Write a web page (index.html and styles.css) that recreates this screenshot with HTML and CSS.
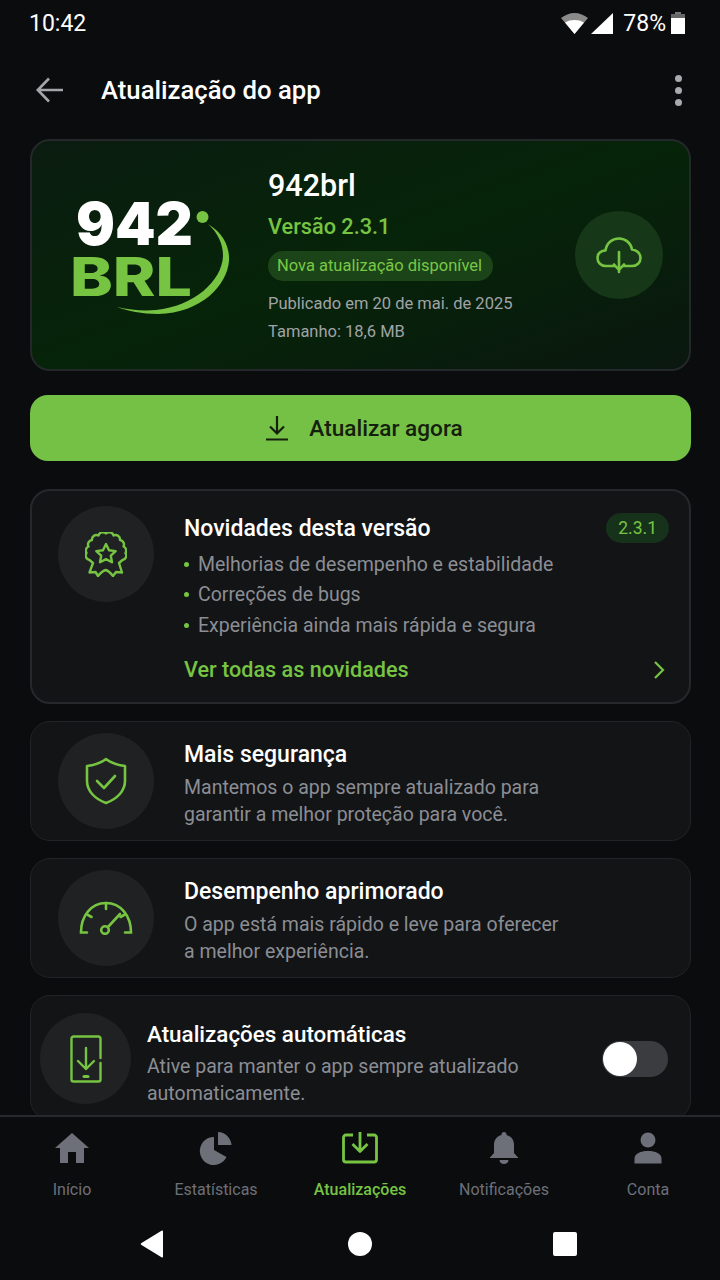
FILE: index.html
```html
<!DOCTYPE html>
<html lang="pt-BR">
<head>
  <meta charset="UTF-8">
  <meta name="viewport" content="width=device-width, initial-scale=1.0">
  <title>Atualização do app</title>
  <link rel="stylesheet" href="styles.css">
</head>
<body>
  <div class="status-bar">
    <span class="clock">10:42</span>
    <div class="status-right">
      <svg class="wifi" width="27" height="21" viewBox="0 0 27 21"><path d="M0 5C4 2 8.500 0 13.500 0S23 2 27 5L13.500 21z" fill="#8a8a8a"/><path d="M4 9.500C6.800 7.800 10 7 13.500 7s6.700.8 9.500 2.500L13.500 21z" fill="#fff"/></svg>
      <svg class="signal" width="22" height="21" viewBox="0 0 22 21"><path d="M22 0v21H0z" fill="#fff"/></svg>
      <span class="battery-text">78%</span>
      <svg class="battery" width="14" height="22" viewBox="0 0 14 22"><path d="M4 0h6v2H4z" fill="#777"/><path d="M0 2h14v4H0z" fill="#666"/><path d="M0 6h14v16H0z" fill="#fff"/></svg>
    </div>
  </div>

  <header class="topbar">
    <svg class="back" width="30" height="30" viewBox="0 0 30 30" fill="none" stroke="#a3a5a8" stroke-width="2.600"><path d="M28 15H3M14 3.500 2.800 15 14 26.500"/></svg>
    <h1>Atualização do app</h1>
    <div class="more"><i></i><i></i><i></i></div>
  </header>

  <main class="content">
    <section class="hero">
      <svg class="logo" width="170" height="130" viewBox="0 0 170 130">
        <text class="logo-num" x="4" y="65" textLength="117" lengthAdjust="spacingAndGlyphs">942</text>
        <text class="logo-brl" x="-2" y="116" textLength="122" lengthAdjust="spacingAndGlyphs">BRL</text>
        <circle cx="130.500" cy="37" r="6" fill="#76c442"/>
        <path transform="translate(-2 1)" d="M138 43C153 52 160 66 159 80 157 104 132 132 88 133 72 133 58 130 47 126 60 129 73 130 86 129 124 125 152 100 153 75 153 63 148 52 138 43z" fill="#76c442"/>
      </svg>
      <div class="hero-info">
        <div class="app-name">942brl</div>
        <div class="app-version">Versão 2.3.1</div>
        <div class="badge-new">Nova atualização disponível</div>
        <div class="meta">Publicado em 20 de mai. de 2025</div>
        <div class="meta">Tamanho: 18,6 MB</div>
      </div>
      <div class="cloud-circle">
        <svg width="46" height="38" viewBox="0 0 46 38" fill="none" stroke="#76c442" stroke-width="2.600" stroke-linecap="round" stroke-linejoin="round"><path d="M19 30H10C5 30 1.500 26.500 1.500 22S5 14.500 9.500 14.500C10.500 7 16 2.500 23 2.500S35 7.500 36 13.500C41 14 44.500 17.500 44.500 22S41 30 36 30H27"/><path d="M23 16V36M18 28.500l5 5.500 5-5.500"/></svg>
      </div>
    </section>

    <button class="update-btn">
      <svg width="24" height="26" viewBox="0 0 24 26" fill="none" stroke="#14200c" stroke-width="2.200"><path d="M12 1v17M5 11.500l7 7 7-7M1 24.500h22"/></svg>
      Atualizar agora
    </button>

    <section class="card card-news">
      <div class="icon-circle">
        <svg width="42" height="45" viewBox="0 0 42 45" fill="none" stroke="#76c442" stroke-width="2.400" stroke-linejoin="round" stroke-linecap="round"><path d="M21 1.500A4.500 4.500 0 0 1 28.500 3.500 4.500 4.500 0 0 1 35 8 4.500 4.500 0 0 1 38.500 14.500 4.500 4.500 0 0 1 40.500 21 4.500 4.500 0 0 1 37.500 28L34 31 37 40.500 31 40 28 44Q24 39 20.800 38 17 39 13 44L10.500 40 4.500 40.500 8 31 4.500 28A4.500 4.500 0 0 1 1.500 21 4.500 4.500 0 0 1 3.500 14.500 4.500 4.500 0 0 1 7 8 4.500 4.500 0 0 1 13.500 3.500 4.500 4.500 0 0 1 21 1.500z"/><path d="M21 12l3 6.200 6.700.9-4.900 4.600 1.200 6.600-6-3.200-6 3.200 1.200-6.600-4.900-4.600 6.700-.9z"/></svg>
      </div>
      <div class="card-body">
        <h2>Novidades desta versão</h2>
        <ul class="news-list">
          <li>Melhorias de desempenho e estabilidade</li>
          <li>Correções de bugs</li>
          <li>Experiência ainda mais rápida e segura</li>
        </ul>
        <a class="see-all">
          <span>Ver todas as novidades</span>
          <svg width="12" height="20" viewBox="0 0 12 20" fill="none" stroke="#76c442" stroke-width="2.200"><path d="M2 2l8 8-8 8"/></svg>
        </a>
      </div>
      <span class="version-tag">2.3.1</span>
    </section>

    <section class="card card-row">
      <div class="icon-circle">
        <svg width="42" height="48" viewBox="0 0 42 48" fill="none" stroke="#76c442" stroke-width="2.600" stroke-linejoin="round" stroke-linecap="round"><path d="M21 2C26 6 32 8 40 9V24C40 34 32 42 21 46 10 42 2 34 2 24V9C10 8 16 6 21 2z"/><path d="M12 24l7 7 11-12"/></svg>
      </div>
      <div class="card-body">
        <h2>Mais segurança</h2>
        <p>Mantemos o app sempre atualizado para<br>garantir a melhor proteção para você.</p>
      </div>
    </section>

    <section class="card card-row">
      <div class="icon-circle">
        <svg width="54" height="34" viewBox="0 0 54 34" fill="none" stroke="#76c442" stroke-width="2.600" stroke-linecap="round"><path d="M8 31.500H2C2 15 12 2 27 2S52 15 52 31.500H46"/><path d="M27 2v6M9 14l3.500 2M45 14l-3.500 2"/><circle cx="26" cy="29" r="3.800"/><path d="M29 26L41 13"/></svg>
      </div>
      <div class="card-body">
        <h2>Desempenho aprimorado</h2>
        <p>O app está mais rápido e leve para oferecer<br>a melhor experiência.</p>
      </div>
    </section>

    <section class="card card-auto">
      <div class="icon-circle icon-circle-auto">
        <svg width="34" height="48" viewBox="0 0 34 48" fill="none" stroke="#76c442" stroke-width="2.400" stroke-linecap="round" stroke-linejoin="round"><path d="M31.500 23V3.500a2 2 0 0 0-2-2h-25a2 2 0 0 0-2 2v41a2 2 0 0 0 2 2h25a2 2 0 0 0 2-2V28"/><path d="M17 13v21M9 26l8 8 8-8"/><path d="M15 41.500h4" stroke-width="3"/></svg>
      </div>
      <div class="card-body">
        <h2>Atualizações automáticas</h2>
        <p>Ative para manter o app sempre atualizado<br>automaticamente.</p>
      </div>
      <div class="toggle"><span class="knob"></span></div>
    </section>
  </main>

  <nav class="bottom-nav">
    <a class="nav-item">
      <svg width="34" height="32" viewBox="0 0 34 32"><path d="M17 1L0 16h5v15h8V20h8v11h8V16h5z" fill="#6d7078"/></svg>
      <span>Início</span>
    </a>
    <a class="nav-item">
      <svg width="34" height="34" viewBox="0 0 34 34"><path d="M15 6A14 14 0 1 0 27.500 26L15 19z" fill="#6d7078"/><path d="M19 1A14 14 0 0 1 32.500 14H19z" fill="#6d7078"/></svg>
      <span>Estatísticas</span>
    </a>
    <a class="nav-item active">
      <svg width="36" height="32" viewBox="0 0 36 32" fill="none" stroke="#76c442" stroke-width="2.800" stroke-linejoin="round"><path d="M11 3H4a2.500 2.500 0 0 0-2.500 2.500v22A2.500 2.500 0 0 0 4 30h28a2.500 2.500 0 0 0 2.500-2.500v-22A2.500 2.500 0 0 0 32 3h-7"/><path d="M18 0v19M10.500 12l7.500 7.500 7.500-7.500"/></svg>
      <span>Atualizações</span>
    </a>
    <a class="nav-item">
      <svg width="30" height="34" viewBox="0 0 30 34"><path d="M15 1a2.500 2.500 0 0 1 2.500 2.500v.6C22.500 5.300 25 9.300 25 14v8l4.500 5H.5L5 22v-8c0-4.700 2.500-8.700 7.500-9.900v-.6A2.500 2.500 0 0 1 15 1zM10.500 29h9c0 2.500-2 4-4.500 4s-4.500-1.500-4.500-4z" fill="#6d7078"/></svg>
      <span>Notificações</span>
    </a>
    <a class="nav-item">
      <svg width="30" height="32" viewBox="0 0 30 32"><circle cx="15" cy="8" r="7.500" fill="#6d7078"/><path d="M1.500 31.500v-5c0-5 6-7.500 13.500-7.500s13.500 2.500 13.500 7.500v5z" fill="#6d7078"/></svg>
      <span>Conta</span>
    </a>
  </nav>

  <div class="system-nav">
    <svg width="26" height="28" viewBox="0 0 26 28"><path d="M23 1.500v25a1 1 0 0 1-1.500.8L1.500 15a1.200 1.200 0 0 1 0-2L21.500.7A1 1 0 0 1 23 1.500z" fill="#fff"/></svg>
    <span class="sys-circle"></span>
    <span class="sys-square"></span>
  </div>
</body>
</html>
```

FILE: styles.css
```css
* {
  box-sizing: border-box;
}
body {
  margin: 0;
  width: 720px;
  height: 1280px;
  overflow: hidden;
  display: flex;
  flex-direction: column;
  background: #0b0c0e;
  color: white;
  font-family: Roboto, "Liberation Sans", sans-serif;
}
.status-bar {
  height: 46px;
  flex: none;
  display: flex;
  align-items: center;
  justify-content: space-between;
  padding: 0 35px 0 29px;
}
.clock {
  font-size: 23px;
}
.status-right {
  display: flex;
  align-items: center;
}
.wifi {
  margin-right: 3px;
}
.battery-text {
  margin: 0 5px 0 10px;
  font-size: 23px;
}
.topbar {
  height: 88px;
  flex: none;
  display: flex;
  align-items: center;
  padding: 0 38px 0 35px;
}
.topbar h1 {
  flex: 1;
  margin: 0 0 0 36px;
  font-size: 25.700px;
  font-weight: 500;
}
.more {
  display: flex;
  flex-direction: column;
  gap: 5px;
}
.more i {
  width: 7px;
  height: 7px;
  border-radius: 50%;
  background: #a8aaad;
}
.content {
  flex: 1;
  min-height: 0;
  overflow: hidden;
  padding: 5px 29px 0 30px;
  display: flex;
  flex-direction: column;
}
.hero {
  flex: none;
  height: 232px;
  display: flex;
  align-items: center;
  padding: 0 26px 0 40px;
  border: 2px solid #24282a;
  border-radius: 20px;
  background: linear-gradient(160deg, #0a1c10 0%, #062409 50%, #0a170f 100%);
}
.logo {
  flex: none;
  margin-top: -20px;
  overflow: visible;
}
.logo-num {
  font-family: Inter, sans-serif;
  font-size: 59px;
  font-weight: 900;
  fill: #fff;
}
.logo-brl {
  font-family: Inter, sans-serif;
  font-size: 53px;
  font-weight: 800;
  fill: #76c442;
}
.hero-info {
  flex: 1;
  margin-left: 26px;
  margin-right: -30px;
  padding-top: 4px;
}
.app-name {
  font-size: 30.500px;
  font-weight: 500;
  line-height: 36px;
}
.app-version {
  margin-top: 10px;
  font-size: 21.700px;
  font-weight: 500;
  line-height: 26px;
  color: #76c442;
}
.badge-new {
  display: inline-block;
  margin-top: 11px;
  padding: 0 11px 0 9px;
  font-size: 16.500px;
  line-height: 30px;
  border-radius: 15px;
  color: #79c746;
  background: #1b4518;
}
.meta {
  font-size: 16.500px;
  line-height: 28px;
  color: #a0a4a6;
}
.badge-new + .meta {
  margin-top: 9px;
}
.cloud-circle {
  flex: none;
  width: 88px;
  height: 88px;
  border-radius: 50%;
  background: #173719;
  display: flex;
  align-items: center;
  justify-content: center;
}
.update-btn {
  flex: none;
  margin-top: 24px;
  height: 66px;
  width: 100%;
  padding: 0 0 0 7px;
  border: none;
  border-radius: 18px;
  background: #74c146;
  color: #14200c;
  font-family: inherit;
  font-size: 22.600px;
  font-weight: 500;
  display: flex;
  align-items: center;
  justify-content: center;
  gap: 20px;
}
.card {
  flex: none;
  border: 1px solid #212326;
  border-radius: 20px;
  background: #131416;
}
.card-news {
  position: relative;
  margin-top: 28px;
  height: 215px;
  display: flex;
  padding: 15px 21px 0 26px;
  border: 2px solid #26282b;
}
.card-row {
  margin-top: 17px;
  height: 120px;
  display: flex;
  align-items: center;
  padding: 0 21px 0 27px;
}
.card-auto {
  margin-top: 17px;
  height: 125px;
  display: flex;
  align-items: flex-start;
  padding: 17px 22px 0 9px;
}
.icon-circle {
  flex: none;
  width: 96px;
  height: 96px;
  border-radius: 50%;
  background: #1f2123;
  display: flex;
  align-items: center;
  justify-content: center;
}
.icon-circle-auto {
  width: 91px;
  height: 91px;
}
.card-body {
  flex: 1;
  margin-left: 30px;
}
.card-news .card-body {
  padding-top: 9px;
}
.card-row .card-body {
  padding-top: 6px;
}
.card-auto .card-body {
  margin-left: 16px;
  padding-top: 7px;
}
.card h2 {
  margin: 0;
  font-size: 23px;
  font-weight: 500;
  line-height: 28px;
}
.card-auto h2 {
  font-size: 22.400px;
}
.card p {
  margin: 5px 0 0;
  font-size: 19.500px;
  line-height: 27px;
  color: #8b8e94;
}
.news-list {
  list-style: none;
  margin: 7px 0 0;
  padding: 0;
}
.news-list li {
  font-size: 19.500px;
  line-height: 30.400px;
  color: #8b8e94;
}
.news-list li::before {
  content: "";
  display: inline-block;
  width: 5px;
  height: 5px;
  margin-right: 9px;
  vertical-align: 4px;
  border-radius: 50%;
  background: #76c442;
}
.see-all {
  margin-top: 15px;
  display: flex;
  align-items: center;
  justify-content: space-between;
  padding-right: 3px;
  font-size: 21.600px;
  font-weight: 500;
  line-height: 28px;
  color: #76c442;
}
.version-tag {
  position: absolute;
  top: 22px;
  right: 20px;
  padding: 0 12px;
  font-size: 17.500px;
  line-height: 30px;
  border-radius: 15px;
  color: #76c442;
  background: #16321a;
}
.toggle {
  flex: none;
  width: 66px;
  height: 36px;
  margin-top: 28px;
  border-radius: 18px;
  background: #3a3c40;
}
.knob {
  display: block;
  width: 34px;
  height: 34px;
  margin-left: 1px;
  margin-top: 1px;
  border-radius: 50%;
  background: white;
}
.bottom-nav {
  flex: none;
  height: 101px;
  display: grid;
  grid-template-columns: repeat(5, 144px);
  border-top: 2px solid #26282b;
  background: #0b0c0e;
}
.nav-item {
  display: flex;
  flex-direction: column;
  align-items: center;
  padding-top: 14px;
  font-size: 16px;
  color: #6d7078;
}
.nav-item svg {
  height: 34px;
}
.nav-item span {
  margin-top: 15px;
}
.nav-item.active {
  color: #76c442;
  font-weight: 500;
}
.system-nav {
  flex: none;
  height: 64px;
  padding: 0 143px 8px 140px;
  display: flex;
  align-items: center;
  justify-content: space-between;
}
.sys-circle {
  width: 24px;
  height: 24px;
  border-radius: 50%;
  background: white;
}
.sys-square {
  width: 24px;
  height: 24px;
  border-radius: 2px;
  background: white;
}
```
